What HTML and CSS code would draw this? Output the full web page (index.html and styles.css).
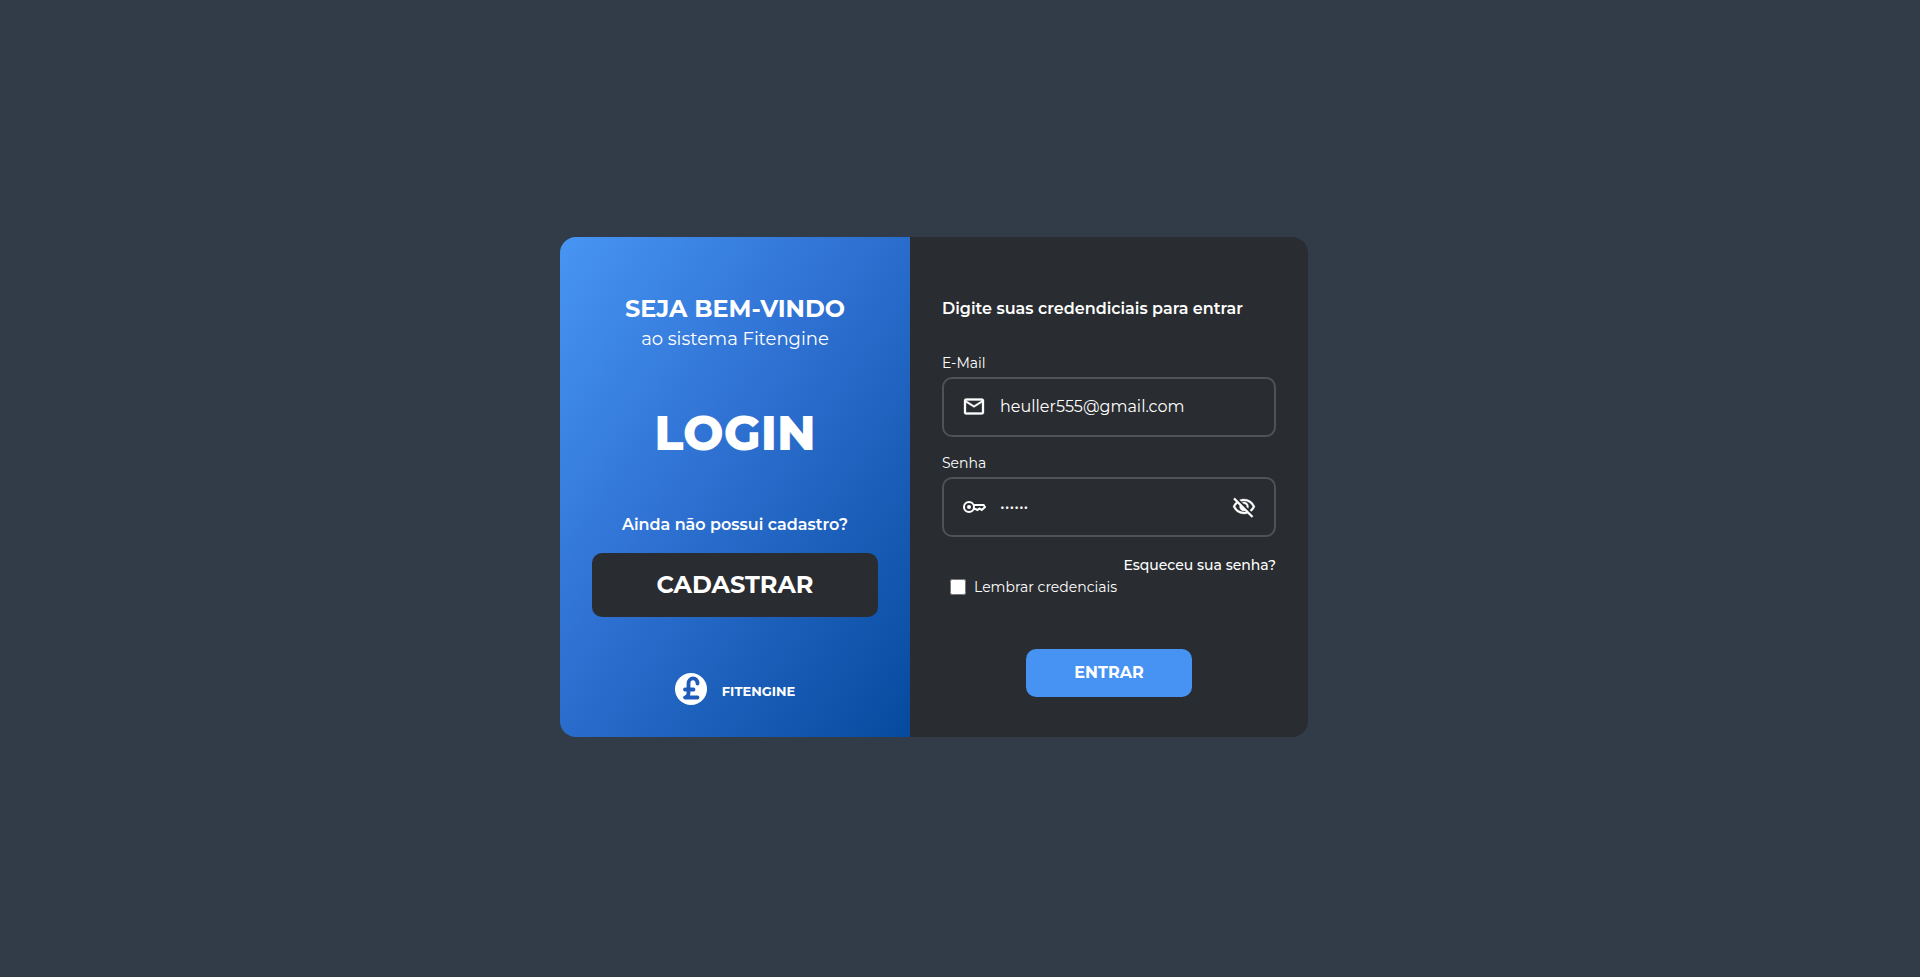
FILE: index.html
```html
<!DOCTYPE html>
<html lang="pt-BR">
<head>
<meta charset="utf-8">
<meta name="viewport" content="width=device-width, initial-scale=1">
<title>Fitengine - Login</title>
<link rel="stylesheet" href="styles.css">
</head>
<body>
<main class="page">
  <div class="container">
    <section class="welcome">
      <header class="greeting">
        <h2 class="greeting-title">SEJA BEM-VINDO</h2>
        <p class="greeting-text">ao sistema Fitengine</p>
      </header>
      <h1 class="login-title">LOGIN</h1>
      <p class="question">Ainda não possui cadastro?</p>
      <button class="register" type="button">CADASTRAR</button>
      <div class="brand">
        <svg class="brand-logo" viewBox="0 0 32 32" aria-hidden="true">
          <circle cx="16" cy="16" r="16" fill="#fff"/>
          <path d="M22.500 10.500C22.500 3.500 13.500 4 13.500 10.500V20Q13.500 23.500 10 24.500H22.500M10 16.500H18.500" fill="none" stroke="#1f5cba" stroke-width="3.800" stroke-linecap="round" stroke-linejoin="round"/>
        </svg>
        <span class="brand-name">FITENGINE</span>
      </div>
    </section>
    <form class="credentials">
      <h2 class="form-title">Digite suas credendiciais para entrar</h2>
      <label class="field-label" for="email">E-Mail</label>
      <div class="field">
        <svg class="icon" viewBox="0 0 24 24" aria-hidden="true"><path d="M22 5.500c0-1.100-.9-2-2-2H4c-1.100 0-2 .9-2 2v12c0 1.100.9 2 2 2h16c1.100 0 2-.9 2-2V5.500zm-2 0l-8 5-8-5h16zm0 12H4V7.500l8 5 8-5v10z"/></svg>
        <input class="field-input" id="email" type="email" value="heuller555@gmail.com">
      </div>
      <label class="field-label" for="senha">Senha</label>
      <div class="field">
        <svg class="icon" viewBox="0 0 24 24" aria-hidden="true"><path d="M12 10H21.600L23 12L19.800 15L17.500 13.400L15.500 15L13.500 14H12" fill="none" stroke="#fff" stroke-width="2"/><circle cx="7" cy="12" r="5" fill="none" stroke="#fff" stroke-width="2"/><circle cx="7" cy="12" r="2"/></svg>
        <input class="field-input" id="senha" type="password" value="123456">
        <button class="toggle" type="button" aria-label="Mostrar senha">
          <svg class="icon" viewBox="0 0 24 24" aria-hidden="true"><path d="m16.100 13.300-1.450-1.450q.225-1.175-.675-2.200t-2.325-.8L10.200 7.400q.425-.2.863-.3T12 7q1.875 0 3.188 1.313T16.500 11.500q0 .5-.1.938t-.3.862Zm3.200 3.150-1.450-1.400q.95-.725 1.688-1.588T20.800 11.500q-1.250-2.525-3.588-4.013T12 6q-.725 0-1.425.1T9.200 6.400L7.650 4.850q1.025-.425 2.100-.638T12 4q3.775 0 6.725 2.088T23 11.500q-.575 1.475-1.513 2.738T19.300 16.450Zm.5 6.150-4.200-4.150q-.875.275-1.762.413T12 19q-3.775 0-6.725-2.087T1 11.500q.525-1.325 1.325-2.463T4.150 7L1.400 4.200l1.400-1.400 18.400 18.400-1.400 1.400ZM5.550 8.400q-.725.650-1.325 1.425T3.200 11.500q1.250 2.525 3.588 4.013T12 17q.5 0 .975-.063t.975-.137l-.9-.95q-.275.075-.525.113T12 16q-1.875 0-3.187-1.312T7.500 11.500q0-.275.038-.525t.112-.525L5.550 8.400Z"/></svg>
        </button>
      </div>
      <a class="forgot" href="#">Esqueceu sua senha?</a>
      <label class="remember"><input class="remember-box" type="checkbox">Lembrar credenciais</label>
      <button class="submit" type="submit">ENTRAR</button>
    </form>
  </div>
</main>
</body>
</html>
```
FILE: styles.css
```css
* {
  box-sizing: border-box;
  margin: 0;
}

body {
  background: #323c48;
  color: #fff;
  font-family: Montserrat, Inter, sans-serif;
  font-size: 16px;
}

button,
input {
  border: 0;
  color: inherit;
  font-family: inherit;
}

button {
  cursor: pointer;
}

.page {
  display: flex;
  align-items: center;
  justify-content: center;
  min-height: calc(100vh - 4px);
}

.container {
  display: flex;
  width: 100%;
  max-width: 800px;
}

.welcome {
  display: flex;
  flex-direction: column;
  align-items: center;
  flex: 0 1 350px;
  padding: 56px 32px 32px;
  border-radius: 16px 0 0 16px;
  background: linear-gradient(to bottom right, #4795f4, #2f72d3 42%, #064a9f);
  text-align: center;
}

.greeting-title {
  font-size: 24px;
  font-weight: 700;
  line-height: 32px;
}

.greeting-text {
  font-size: 18px;
  font-weight: 400;
  line-height: 28px;
}

.login-title {
  margin-top: 48px;
  font-size: 48px;
  font-weight: 800;
  line-height: 64px;
}

.question {
  margin-top: 48px;
  font-size: 16px;
  font-weight: 600;
  line-height: 24px;
}

.register {
  align-self: stretch;
  height: 64px;
  margin-top: 16px;
  border-radius: 10px;
  background: #292c30;
  font-size: 24px;
  font-weight: 700;
}

.brand {
  display: flex;
  align-items: center;
  gap: 15px;
  margin-top: auto;
}

.brand-logo {
  width: 32px;
  height: 32px;
}

.brand-name {
  padding-top: 4px;
  font-size: 13px;
  font-weight: 700;
  line-height: 20px;
}

.credentials {
  display: flex;
  flex-direction: column;
  flex: 0 1 398px;
  padding: 60px 32px 40px;
  border-radius: 0 16px 16px 0;
  background: #292c30;
}

.form-title {
  margin-bottom: 32px;
  font-size: 16px;
  font-weight: 600;
  line-height: 24px;
}

.field-label {
  padding-bottom: 4px;
  font-size: 14px;
  font-weight: 400;
  line-height: 20px;
}

.field {
  display: flex;
  align-items: center;
  height: 60px;
  margin-bottom: 16px;
  padding: 0 18px;
  border: 2px solid #4f5256;
  border-radius: 10px;
}

.icon {
  display: block;
  flex: none;
  width: 24px;
  height: 24px;
  fill: #fff;
}

.icon path {
  stroke: #fff;
  stroke-width: 0.3;
}

.icon path[fill="none"] {
  stroke-width: 2;
}

.field-input {
  flex: 1;
  min-width: 0;
  padding: 1px 0 0 14px;
  background: transparent;
  font-size: 16px;
  font-weight: 400;
  line-height: 24px;
  outline: 0;
}

.toggle {
  padding: 0;
  background: transparent;
}

.forgot {
  align-self: flex-end;
  margin-top: 2px;
  color: #fff;
  font-size: 14px;
  font-weight: 500;
  line-height: 20px;
  text-decoration: none;
}

.remember {
  display: flex;
  align-items: center;
  align-self: flex-start;
  gap: 8px;
  margin-top: 2px;
  padding-left: 8px;
  font-size: 14px;
  font-weight: 400;
  line-height: 20px;
}

.remember-box {
  width: 16px;
  height: 16px;
  margin: 0;
}

.submit {
  align-self: center;
  width: 166px;
  height: 48px;
  margin-top: 52px;
  border-radius: 10px;
  background: #4693f4;
  font-size: 16px;
  font-weight: 700;
}
```
